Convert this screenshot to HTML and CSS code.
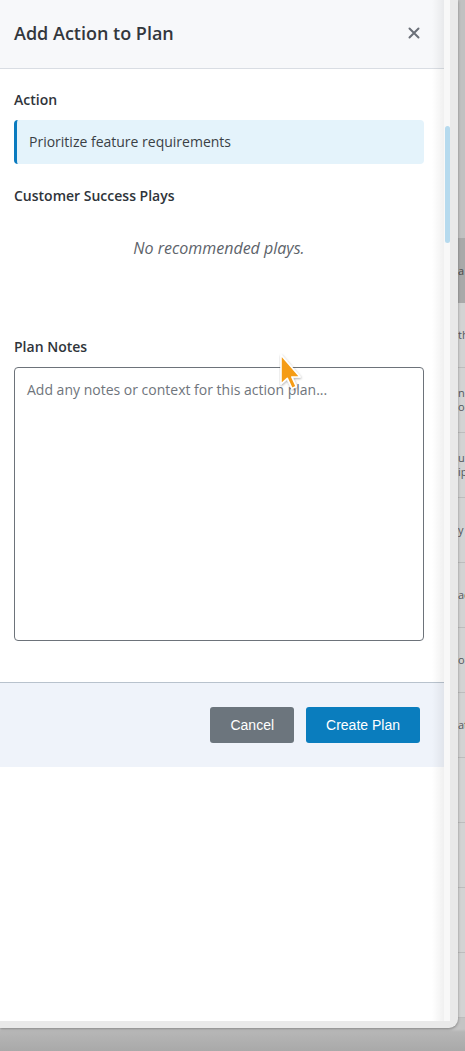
FILE: index.html
```html
<!DOCTYPE html>
<html lang="en">
<head>
<meta charset="utf-8">
<title>Add Action to Plan</title>
<link rel="stylesheet" href="styles.css">
</head>
<body>
<div class="desktop">
  <div class="window">
    <div class="viewport">
      <aside class="panel">
        <header class="panel-header">
          <h1 class="panel-title">Add Action to Plan</h1>
          <button class="close" aria-label="Close">
            <svg width="12" height="12" viewBox="0 0 12 12"><path d="M1.5 1.5 L10.5 10.5 M10.5 1.5 L1.5 10.5" stroke="#6b7078" stroke-width="2" stroke-linecap="round"/></svg>
          </button>
        </header>
        <div class="panel-body">
          <div class="field-label label-action">Action</div>
          <div class="action-box">Prioritize feature requirements</div>
          <div class="field-label label-plays">Customer Success Plays</div>
          <p class="empty">No recommended plays.</p>
          <label class="field-label label-notes" for="notes">Plan Notes</label>
          <textarea id="notes" class="notes" placeholder="Add any notes or context for this action plan..."></textarea>
        </div>
        <footer class="panel-footer">
          <button class="btn btn-cancel">Cancel</button>
          <button class="btn btn-primary">Create Plan</button>
        </footer>
        <div class="edge-shade"></div>
        <svg class="cursor" width="28" height="42" viewBox="0 0 28 42">
          <defs><filter id="sh" x="-30%" y="-30%" width="160%" height="160%"><feDropShadow dx="0.5" dy="1" stdDeviation="0.8" flood-opacity="0.35"/></filter></defs>
          <path d="M2 2 L2 31 L8.3 25.3 L13 35.5 L17.2 33.5 L12.8 24 L21 24 Z" fill="#f59c12" stroke="#ffffff" stroke-width="1.6" stroke-linejoin="round" filter="url(#sh)"/>
        </svg>
      </aside>
      <div class="scrolltrack"><div class="thumb"></div></div>
    </div>
  </div>
  <div class="behind">
    <div class="behind-top"></div>
    <div class="behind-head">a</div>
    <div class="behind-row"><span>th</span></div>
    <div class="behind-row"><span>ne</span><span>ou</span></div>
    <div class="behind-row"><span>u'</span><span>ip</span></div>
    <div class="behind-row"><span>y</span></div>
    <div class="behind-row"><span>ac</span></div>
    <div class="behind-row"><span>ou</span></div>
    <div class="behind-row"><span>at</span></div>
    <div class="behind-row"></div>
    <div class="behind-row"></div>
    <div class="behind-row"></div>
    <div class="behind-row"></div>
  </div>
</div>
</body>
</html>
```

FILE: styles.css
```css
* { box-sizing: border-box; }

html, body {
  margin: 0;
  padding: 0;
}

body {
  width: 465px;
  height: 1051px;
  overflow: hidden;
  font-family: "Open Sans", "Noto Sans", sans-serif;
  background: linear-gradient(#c4c4c4 0, #c4c4c4 1029px, #b6b6b6 1032px, #a9a9a9 1051px);
}

.desktop {
  display: flex;
  align-items: flex-start;
  height: 1029px;
}

.window {
  width: 458px;
  height: 1028px;
  flex: none;
  background: #e9e9e9;
  padding: 0 8px 7px 0;
  border-bottom-right-radius: 9px;
  box-shadow: 0 1px 3px rgba(0, 0, 0, 0.35);
  position: relative;
  z-index: 1;
}

.viewport {
  display: flex;
  height: 100%;
  background: #fff;
}

.panel {
  width: 444px;
  flex: none;
  position: relative;
  display: flex;
  flex-direction: column;
  background: #fff;
}

.panel-header {
  height: 69px;
  flex: none;
  display: flex;
  align-items: center;
  justify-content: space-between;
  padding: 0 24px 2px 14px;
  background: #f7f8fa;
  border-bottom: 1px solid #d9dde3;
}

.panel-title {
  margin: 0;
  font-size: 18px;
  font-weight: 600;
  color: #33373d;
  line-height: 24px;
}

.close {
  border: 0;
  background: none;
  padding: 0;
  width: 12px;
  height: 12px;
  display: flex;
}

.panel-body {
  display: flex;
  flex-direction: column;
  padding: 0 20px 0 14px;
}

.field-label {
  font-size: 14px;
  font-weight: 600;
  color: #2f343a;
  line-height: 20px;
}

.label-action { margin-top: 21px; }
.label-plays { margin-top: 22px; }
.label-notes { margin-top: 47px; }

.action-box {
  margin-top: 10px;
  padding: 12px 15px 12px 12px;
  background: #e4f3fb;
  border-left: 3px solid #0a7bbf;
  border-radius: 4px;
  font-size: 14px;
  line-height: 20px;
  color: #3a3f45;
}

.empty {
  margin: 0;
  padding: 31px 0;
  text-align: center;
  font-style: italic;
  font-size: 16px;
  line-height: 22px;
  color: #5d636a;
}

.notes {
  margin-top: 10px;
  height: 274px;
  width: 100%;
  resize: none;
  border: 1px solid #6d737a;
  border-radius: 4px;
  padding: 12px;
  font-family: "Open Sans", "Noto Sans", sans-serif;
  font-size: 14px;
  line-height: 20px;
  color: #333;
  background: #fff;
}

.notes::placeholder {
  color: #6f757c;
}

.panel-footer {
  margin-top: 41px;
  display: flex;
  justify-content: flex-end;
  gap: 12px;
  padding: 24px 24px 24px 14px;
  background: #eff3fa;
  border-top: 1px solid #b8c2cd;
}

.btn {
  height: 36px;
  padding: 0 20px;
  border: 0;
  border-radius: 3px;
  font-family: "Liberation Sans", Arial, sans-serif;
  font-size: 14px;
  color: #fff;
}

.btn-cancel { background: #6c757d; }
.btn-primary { background: #0a7dbe; }

.edge-shade {
  position: absolute;
  top: 0;
  right: 0;
  bottom: 0;
  width: 12px;
  background: linear-gradient(to right, rgba(0, 0, 0, 0), rgba(0, 0, 0, 0.06));
  pointer-events: none;
}

.cursor {
  position: absolute;
  left: 279px;
  top: 353px;
}

.scrolltrack {
  width: 6px;
  flex: none;
  background: #f8f8f8;
  padding-top: 126px;
}

.thumb {
  width: 5px;
  height: 117px;
  margin-left: 1px;
  border-radius: 3px;
  background: #b6daee;
}

.behind {
  flex: 1;
  height: 1029px;
  display: flex;
  flex-direction: column;
  overflow: hidden;
  font-size: 11px;
  line-height: 14px;
  color: #55595e;
  white-space: nowrap;
}

.behind-top {
  height: 238px;
  flex: none;
  background: #c1c1c1;
}

.behind-head {
  height: 65px;
  flex: none;
  background: #a9a9a9;
  display: flex;
  align-items: center;
  color: #4a4a4a;
}

.behind-row {
  height: 65px;
  flex: none;
  background: #d3d3d3;
  border-bottom: 1px solid #bdbdbd;
  display: flex;
  flex-direction: column;
  justify-content: center;
}

.behind-row span {
  display: block;
  height: 14px;
}
```
